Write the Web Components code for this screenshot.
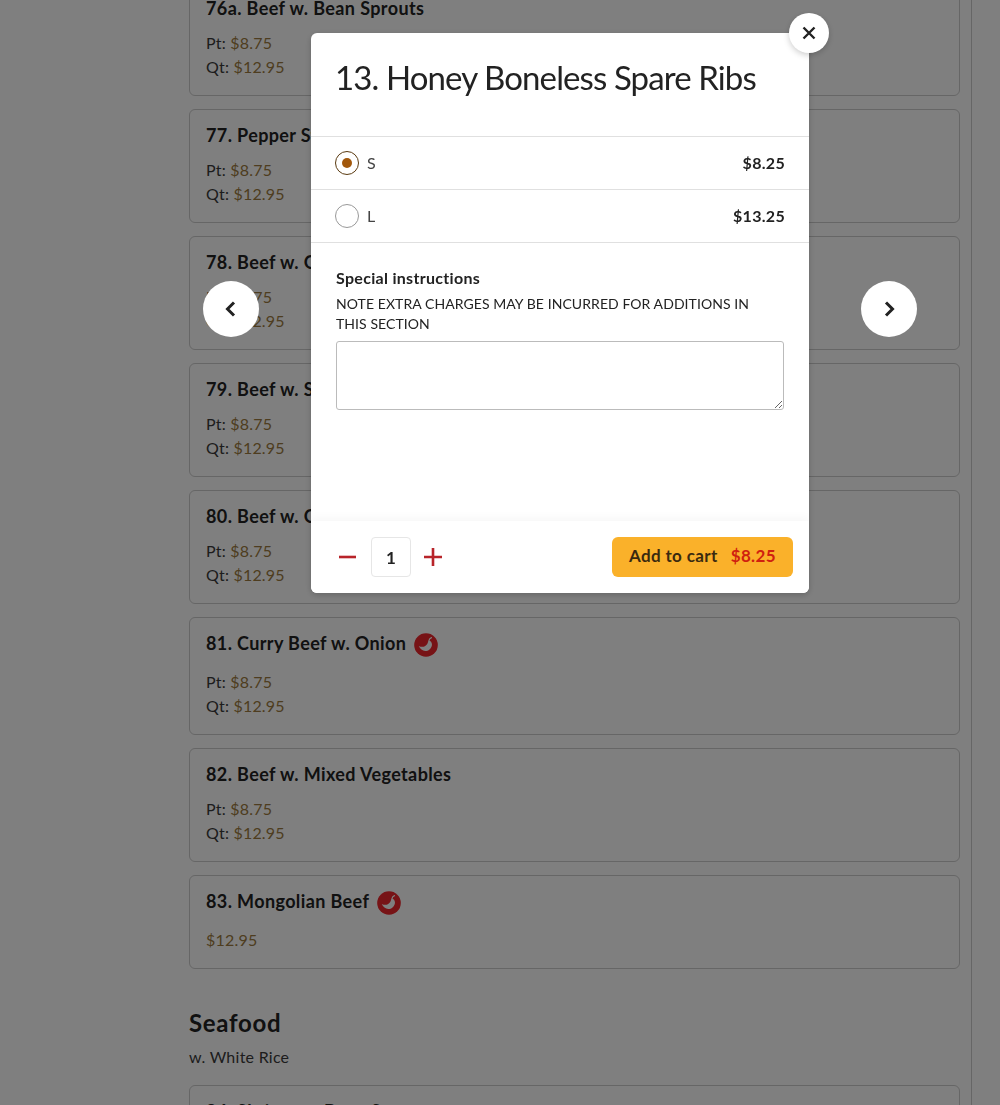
<!DOCTYPE html>
<html lang="en">
<head>
<meta charset="utf-8">
<title>Menu</title>
<style>
  html, body { margin: 0; height: 100%; overflow: hidden; background: #fff; }
  body { font-family: Lato, "Noto Sans", sans-serif; color: #222; }
</style>
</head>
<body>
<menu-page>
  <menu-card name="76a. Beef w. Bean Sprouts"><price-line label="Pt:" price="$8.75"></price-line><price-line label="Qt:" price="$12.95"></price-line></menu-card>
  <menu-card name="77. Pepper Steak"><price-line label="Pt:" price="$8.75"></price-line><price-line label="Qt:" price="$12.95"></price-line></menu-card>
  <menu-card name="78. Beef w. Green Beans"><price-line label="Pt:" price="$8.75"></price-line><price-line label="Qt:" price="$12.95"></price-line></menu-card>
  <menu-card name="79. Beef w. String Beans"><price-line label="Pt:" price="$8.75"></price-line><price-line label="Qt:" price="$12.95"></price-line></menu-card>
  <menu-card name="80. Beef w. Oyster Sauce"><price-line label="Pt:" price="$8.75"></price-line><price-line label="Qt:" price="$12.95"></price-line></menu-card>
  <menu-card name="81. Curry Beef w. Onion" spicy><price-line label="Pt:" price="$8.75"></price-line><price-line label="Qt:" price="$12.95"></price-line></menu-card>
  <menu-card name="82. Beef w. Mixed Vegetables"><price-line label="Pt:" price="$8.75"></price-line><price-line label="Qt:" price="$12.95"></price-line></menu-card>
  <menu-card name="83. Mongolian Beef" spicy><price-line price="$12.95"></price-line></menu-card>
  <menu-section name="Seafood" note="w. White Rice"></menu-section>
  <menu-card name="84. Shrimp w. Bean Sprouts"><price-line label="Pt:" price="$9.75"></price-line></menu-card>
</menu-page>

<modal-layer>
  <nav-arrow dir="left"></nav-arrow>
  <item-modal name="13. Honey Boneless Spare Ribs">
    <option-row label="S" price="$8.25" checked></option-row>
    <option-row label="L" price="$13.25"></option-row>
  </item-modal>
  <nav-arrow dir="right"></nav-arrow>
</modal-layer>

<script>
const font = 'Lato, "Noto Sans", sans-serif'

class MenuPage extends HTMLElement {
  constructor() {
    super()
    this.attachShadow({ mode: 'open' }).innerHTML = `
      <style>
        :host { display: block; width: 972px; box-sizing: border-box; margin-top: -18px; padding: 0 11px 0 189px; border-right: 1px solid #ccc; font-family: ${font}; }
        .list { display: flex; flex-direction: column; gap: 13px; }
      </style>
      <div class="list"><slot></slot></div>`
  }
}

class MenuCard extends HTMLElement {
  constructor() {
    super()
    const icon = this.hasAttribute('spicy') ? '<spice-icon></spice-icon>' : ''
    this.attachShadow({ mode: 'open' }).innerHTML = `
      <style>
        :host { display: block; border: 1px solid #ccc; border-radius: 6px; padding: 14px 16px 16px; }
        .title { display: flex; align-items: flex-start; gap: 8px; margin-bottom: 12px; }
        h3 { margin: 0; font-size: 18px; line-height: 22px; font-weight: 700; color: #222; letter-spacing: .38px; white-space: nowrap; }
      </style>
      <div class="title"><h3>${this.getAttribute('name')}</h3>${icon}</div>
      <slot></slot>`
  }
}

class SpiceIcon extends HTMLElement {
  constructor() {
    super()
    this.attachShadow({ mode: 'open' }).innerHTML = `
      <style>
        :host { display: block; width: 24px; height: 26px; }
        svg { display: block; margin-top: 1px; }
      </style>
      <svg width="24" height="24" viewBox="0 0 25 25">
        <circle cx="12.5" cy="12.5" r="12.300" fill="#ee262c"/>
        <path d="M5 13.500c2 1.100 4.400 1.300 6.300.3 2-1 3-2.800 3.400-4.900.2-.9 1.300-1.200 2.100-.6 1.400 1 2.300 2.800 1.800 4.900-.8 3.200-3.600 5.600-6.900 5.500-2.800-.1-5.400-2.400-6.700-5.200z" fill="#fff"/>
        <path d="M15.500 8.200c.2-1.600 1-2.800 2.700-3.400" fill="none" stroke="#fff" stroke-width="1.200" stroke-linecap="round"/>
      </svg>`
  }
}

class PriceLine extends HTMLElement {
  constructor() {
    super()
    const label = this.getAttribute('label')
    this.attachShadow({ mode: 'open' }).innerHTML = `
      <style>
        :host { display: block; font-size: 16px; line-height: 24px; color: #3a3a3a; letter-spacing: .2px; }
        span { color: #9c7a40; }
      </style>
      ${label ? label + ' ' : ''}<span>${this.getAttribute('price')}</span>`
  }
}

class MenuSection extends HTMLElement {
  constructor() {
    super()
    this.attachShadow({ mode: 'open' }).innerHTML = `
      <style>
        :host { display: block; padding-top: 23px; margin-bottom: 3px; }
        h2 { margin: 0 0 4px; font-size: 24px; line-height: 36px; font-weight: 700; color: #222; letter-spacing: .7px; }
        p { margin: 0; font-size: 16px; line-height: 24px; color: #3a3a3a; letter-spacing: .25px; }
      </style>
      <h2>${this.getAttribute('name')}</h2>
      <p>${this.getAttribute('note')}</p>`
  }
}

class ModalLayer extends HTMLElement {
  constructor() {
    super()
    this.attachShadow({ mode: 'open' }).innerHTML = `
      <style>
        :host { position: fixed; inset: 0; background: rgba(0,0,0,.5); display: flex; gap: 52px; align-items: flex-start; padding: 33px 0 0 203px; box-sizing: border-box; font-family: ${font}; }
      </style>
      <slot></slot>`
  }
}

class NavArrow extends HTMLElement {
  constructor() {
    super()
    const d = this.getAttribute('dir') === 'left' ? 'M15 5.500l-6.500 6.500 6.500 6.500' : 'M9 5.500l6.500 6.500-6.500 6.500'
    this.attachShadow({ mode: 'open' }).innerHTML = `
      <style>
        :host { display: flex; flex: none; width: 56px; height: 56px; margin-top: 248px; border-radius: 50%; background: #fff; align-items: center; justify-content: center; }
      </style>
      <svg width="24" height="24" viewBox="0 0 24 24" fill="none" stroke="#222" stroke-width="3"><path d="${d}"/></svg>`
  }
}

class ItemModal extends HTMLElement {
  constructor() {
    super()
    this.attachShadow({ mode: 'open' }).innerHTML = `
      <style>
        :host { display: flex; flex-direction: column; position: relative; flex: none; width: 498px; height: 560px; background: #fff; border-radius: 6px; box-shadow: 0 2px 6px rgba(0,0,0,.2); color: #222; }
        h1 { margin: 0; padding: 22px 25px 0 24px; box-sizing: border-box; height: 103px; font-size: 33px; line-height: 44px; font-weight: 400; letter-spacing: -.89px; white-space: nowrap; }
        .options { border-top: 1px solid #e0e0e0; }
        .body { flex: 1; padding: 25px 25px 0; overflow: hidden; }
        .body strong { display: block; font-size: 16px; line-height: 20px; font-weight: 700; letter-spacing: .3px; }
        .body p { margin: 6px 0 7px; max-width: 425px; font-size: 14px; line-height: 20px; letter-spacing: .07px; }
        textarea { display: block; box-sizing: border-box; width: 448px; height: 69px; border: 1px solid #bbb; border-radius: 3px; padding: 6px; margin: 0; outline: 0; font: inherit; }
        .foot { display: flex; align-items: center; justify-content: space-between; height: 72px; flex: none; padding: 0 16px 0 25px; box-sizing: border-box; background: #fff; border-radius: 0 0 6px 6px; box-shadow: 0 -4px 8px rgba(0,0,0,.03); position: relative; }
        .close { position: absolute; top: -20px; right: -20px; width: 40px; height: 40px; border-radius: 50%; background: #fff; box-shadow: 0 2px 6px rgba(0,0,0,.2); display: flex; align-items: center; justify-content: center; }
        .add { display: flex; gap: 13px; align-items: center; height: 40px; width: 181px; box-sizing: border-box; padding: 0 17px 3px; background: #fab12a; border-radius: 6px; font-size: 17px; font-weight: 700; letter-spacing: .36px; color: #3a2a10; white-space: nowrap; }
        .add b { color: #d0200f; font-weight: 700; }
      </style>
      <h1>${this.getAttribute('name')}</h1>
      <div class="options"><slot></slot></div>
      <div class="body">
        <strong>Special instructions</strong>
        <p>NOTE EXTRA CHARGES MAY BE INCURRED FOR ADDITIONS IN THIS SECTION</p>
        <textarea></textarea>
      </div>
      <div class="foot">
        <qty-stepper></qty-stepper>
        <div class="add">Add to cart <b>$8.25</b></div>
      </div>
      <div class="close"><svg width="16" height="16" viewBox="0 0 16 16" fill="none" stroke="#222" stroke-width="2.400"><path d="M2.500 2.500l11 11M13.500 2.500l-11 11"/></svg></div>`
  }
}

class OptionRow extends HTMLElement {
  constructor() {
    super()
    const on = this.hasAttribute('checked')
    this.attachShadow({ mode: 'open' }).innerHTML = `
      <style>
        :host { display: flex; align-items: center; height: 53px; box-sizing: border-box; padding: 0 24px; border-bottom: 1px solid #e0e0e0; font-size: 16px; }
        .radio { width: 24px; height: 24px; box-sizing: border-box; border: 1px solid ${on ? '#5a3a10' : '#999'}; border-radius: 50%; display: flex; align-items: center; justify-content: center; margin-right: 8px; }
        .radio i { width: 10px; height: 10px; border-radius: 50%; background: #a2580c; }
        .label { flex: 1; color: #444; letter-spacing: .3px; padding-bottom: 2px; }
        .price { font-weight: 700; letter-spacing: .3px; padding-bottom: 2px; }
      </style>
      <div class="radio">${on ? '<i></i>' : ''}</div>
      <div class="label">${this.getAttribute('label')}</div>
      <div class="price">${this.getAttribute('price')}</div>`
  }
}

class QtyStepper extends HTMLElement {
  constructor() {
    super()
    this.attachShadow({ mode: 'open' }).innerHTML = `
      <style>
        :host { display: flex; align-items: center; gap: 13px; }
        svg { display: block; }
        .minus { margin-right: 2px; }
        .num { width: 40px; height: 40px; box-sizing: border-box; border: 1px solid #e6e6e6; border-radius: 4px; display: flex; align-items: center; justify-content: center; font-size: 17px; font-weight: 700; }
      </style>
      <svg class="minus" width="20" height="20" viewBox="0 0 20 20" stroke="#b8242a" stroke-width="2.600"><path d="M3 10h17"/></svg>
      <div class="num">1</div>
      <svg width="18" height="20" viewBox="0 0 18 20" stroke="#b8242a" stroke-width="2.600"><path d="M0 10h18M9 1v18"/></svg>`
  }
}

customElements.define('menu-page', MenuPage)
customElements.define('menu-card', MenuCard)
customElements.define('spice-icon', SpiceIcon)
customElements.define('price-line', PriceLine)
customElements.define('menu-section', MenuSection)
customElements.define('modal-layer', ModalLayer)
customElements.define('nav-arrow', NavArrow)
customElements.define('item-modal', ItemModal)
customElements.define('option-row', OptionRow)
customElements.define('qty-stepper', QtyStepper)
</script>
</body>
</html>
